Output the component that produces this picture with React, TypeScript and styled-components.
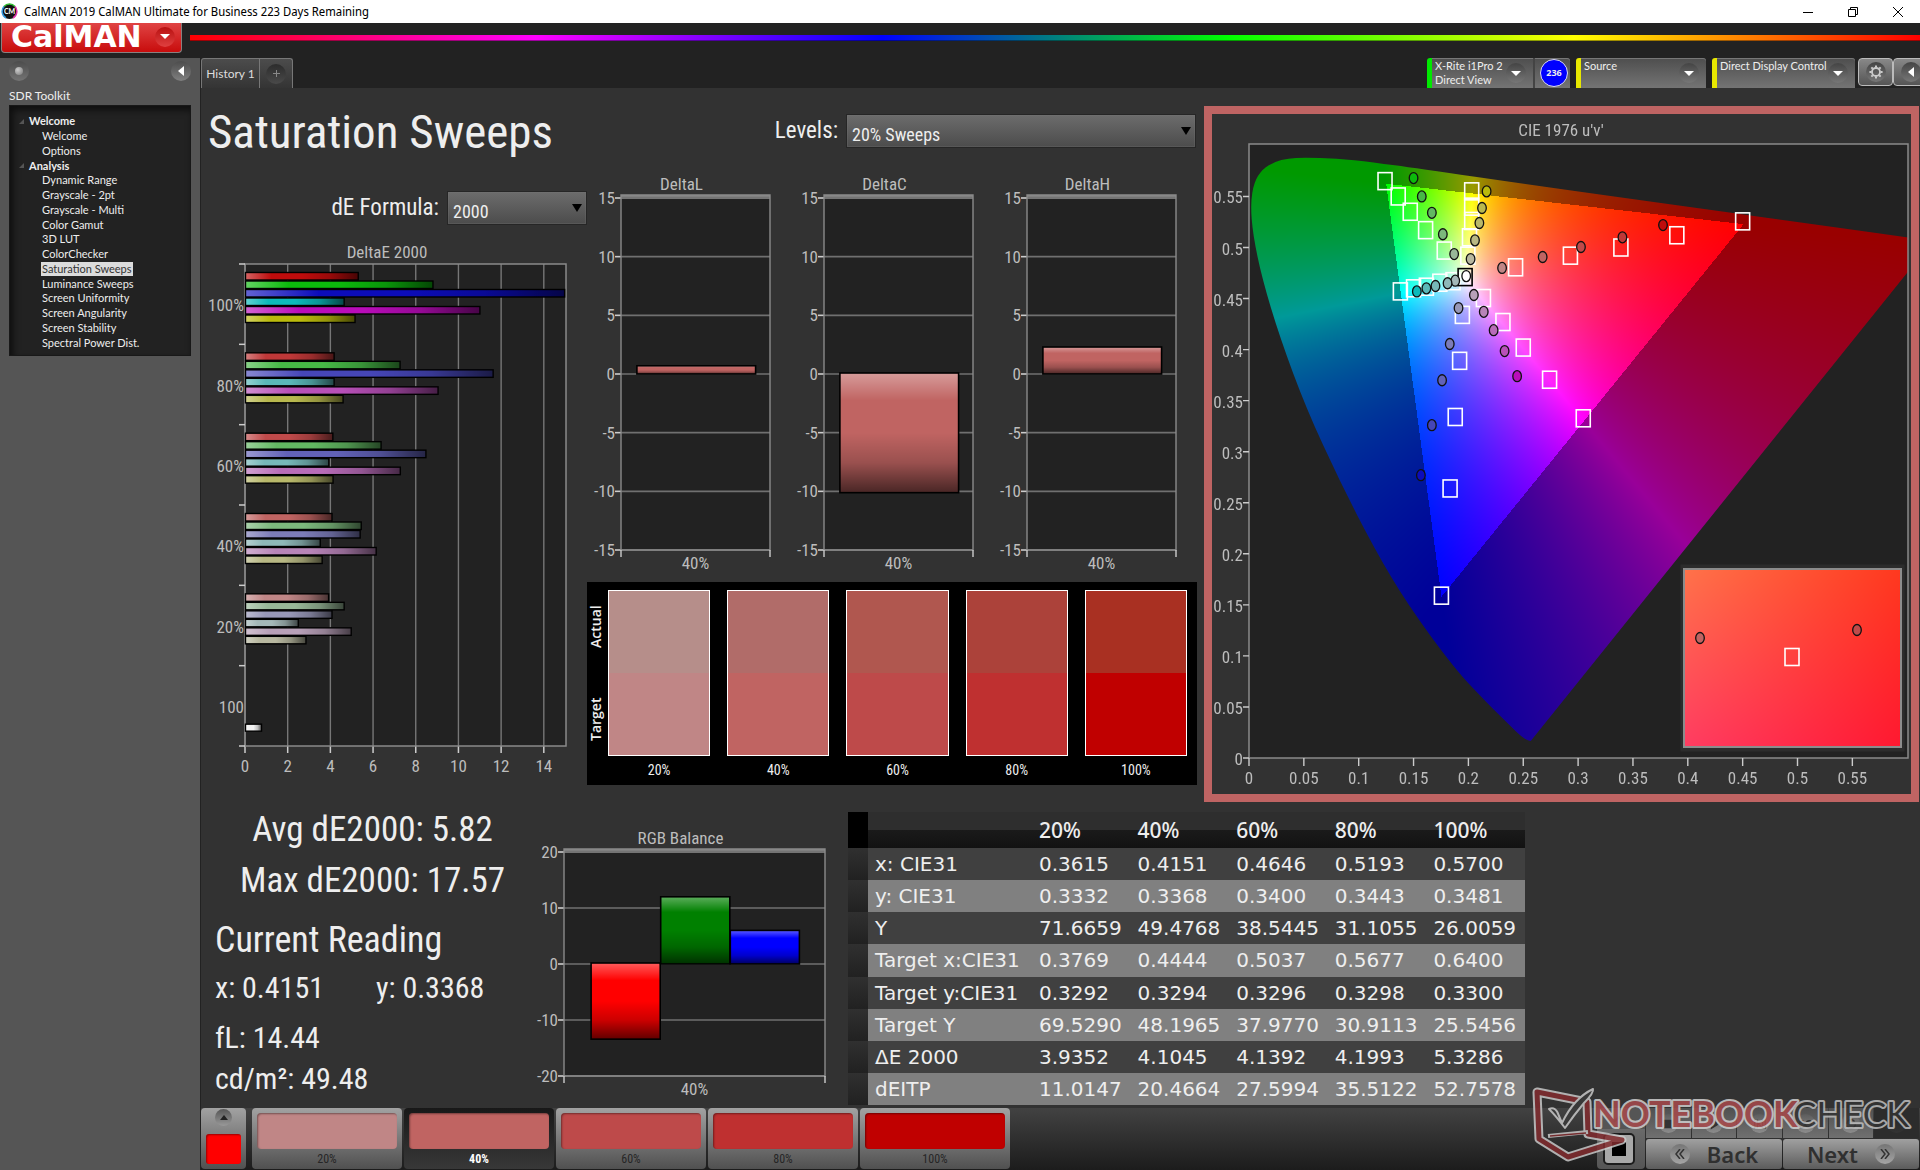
import React, { useLayoutEffect, useRef } from "react";
import styled, { createGlobalStyle } from "styled-components";

const narrow = `"Roboto Condensed", Roboto, sans-serif`;
const ui = `Lato, "Open Sans", sans-serif`;
const wide = `"DejaVu Sans", "Noto Sans", sans-serif`;

const GlobalStyle = createGlobalStyle`
  *, *::before, *::after { box-sizing: border-box; }
  body { margin: 0; background: #222; color: #eee; font-family: ${ui}; }
  button, select { font: inherit; color: inherit; border: 0; padding: 0; margin: 0; background: none; }
  ul { list-style: none; margin: 0; padding: 0; }
  h1, h2, p { margin: 0; font-weight: 400; }
  svg, canvas { display: block; }
`;

/* ---------- window frame ---------- */

const Window = styled.div`
  min-height: 100vh;
  display: flex;
  flex-direction: column;
  overflow: hidden;
`;

const TitleBar = styled.div`
  height: 23px;
  flex: none;
  background: #fff;
  color: #000;
  display: flex;
  align-items: center;
  padding-left: 1px;
  gap: 6px;
  font: 12px/22px "Noto Sans Display", "Noto Sans", sans-serif;
`;

const WindowButtons = styled.div`
  margin-left: auto;
  display: flex;
`;

const WindowButton = styled.button`
  width: 46px;
  height: 20px;
  margin-right: -1px;
  display: flex;
  align-items: center;
  justify-content: center;
`;

const Header = styled.header`
  height: 35px;
  flex: none;
  display: flex;
  background: #222;
`;

const LogoButton = styled.button`
  width: 181px;
  height: 30px;
  margin: 0 8px 0 1px;
  display: flex;
  align-items: center;
  justify-content: space-between;
  padding: 0 6px 2px 9px;
  background: linear-gradient(#e04444, #c80c0c);
  border: 1px solid #8a8080;
  border-top: 0;
  border-radius: 0 0 4px 4px;
  color: #fff;
  font: 700 30px/26px ${wide};
`;

const Rainbow = styled.div`
  flex: 1;
  height: 6px;
  margin-top: 12px;
  border-bottom: 1px solid #00000060;
  background: linear-gradient(90deg, #f00, #f0f, #00f, #0f0, #ff0, #f00);
`;

const Body = styled.div`
  flex: 1;
  display: flex;
`;

/* ---------- sidebar ---------- */

const Sidebar = styled.aside`
  width: 201px;
  flex: none;
  background: #555;
  border-right: 1px solid #222;
  padding: 3px 9px;
`;

const SidebarTop = styled.div`
  display: flex;
  justify-content: space-between;
  height: 27px;
`;

const SidebarTitle = styled.h2`
  font-size: 12px;
  line-height: 16px;
  height: 17px;
`;

const Round = styled.span<{ $size: number; $tone?: string }>`
  width: ${(p) => p.$size}px;
  height: ${(p) => p.$size}px;
  flex: none;
  border-radius: 50%;
  display: flex;
  align-items: center;
  justify-content: center;
  background: ${(p) => p.$tone ?? "linear-gradient(#444, #777)"};
`;

const PlainButton = styled.button`
  display: flex;
  height: 20px;
`;

const Tree = styled.nav`
  height: 251px;
  padding: 8px 0 0 8px;
  background: #222;
  border: 1px solid #181818;
  box-shadow: inset 3px 4px 7px #0009;
`;

const TreeList = styled.ul`
  display: grid;
  grid-auto-rows: 1fr;
  height: 236px;
`;

const TreeItem = styled.li<{ $level: number }>`
  display: flex;
  align-items: center;
  gap: 4px;
  padding-left: ${(p) => (p.$level ? 23 : 1)}px;
  font-size: 11px;
  font-weight: ${(p) => (p.$level ? 400 : 700)};
  line-height: 14px;
`;

const TreeLink = styled.a<{ $active?: boolean }>`
  color: ${(p) => (p.$active ? "#333" : "#eee")};
  background: ${(p) => (p.$active ? "#dcdcdc" : "none")};
  text-decoration: none;
  padding: 0 1px;
`;

/* ---------- tab bar ---------- */

const Content = styled.div`
  flex: 1;
  min-width: 0;
  display: flex;
  flex-direction: column;
  background: #323232;
`;

const TabBar = styled.div`
  height: 30px;
  flex: none;
  display: flex;
  background: #222;
`;

const Tabs = styled.div`
  display: flex;
  border: 1px solid #777;
  border-bottom: 0;
  border-radius: 3px 3px 0 0;
  background: linear-gradient(#4c4c4c, #343434);
  margin-right: auto;
`;

const Tab = styled.button<{ $width: number }>`
  width: ${(p) => p.$width}px;
  font-size: 12px;
  color: #ddd;
  display: flex;
  align-items: center;
  justify-content: center;
  & + & { border-left: 1px solid #777; }
`;

const Device = styled.button<{ $width: number; $lamp: string }>`
  width: ${(p) => p.$width}px;
  margin-right: 6px;
  display: flex;
  align-items: stretch;
  border-left: 5px solid ${(p) => p.$lamp};
  border-radius: 3px 3px 0 0;
  background: linear-gradient(#4e4e4e, #747474);
  box-shadow: inset 0 1px #777;
  text-align: left;
  font-size: 11px;
  line-height: 14px;
`;

const DeviceName = styled.span`
  flex: 1;
  padding: 1px 0 0 3px;
  white-space: pre-line;
`;

const DeviceArrow = styled.span`
  padding: 5px 7px 0 0;
`;

const Count = styled.span`
  border-left: 2px solid #444;
  padding: 1px 2px 0 5px;
`;

const CountBadge = styled.span`
  width: 28px;
  height: 28px;
  border-radius: 50%;
  border: 1px solid #dde;
  background: #00f;
  display: flex;
  align-items: center;
  justify-content: center;
  font: 700 9px/10px "Open Sans", sans-serif;
`;

const ToolButton = styled.button`
  width: 35px;
  height: 28px;
  border: 1px solid #bbb;
  border-radius: 4px;
  background: linear-gradient(#888, #555);
  display: flex;
  align-items: center;
  justify-content: center;
`;

const Tools = styled.div`
  display: flex;
  margin: 0 -8px 0 -3px;
`;

/* ---------- workspace ---------- */

const Upper = styled.section`
  display: flex;
  height: 714px;
`;

const Left = styled.div`
  width: 996px;
  flex: none;
`;

const TitleRow = styled.div`
  height: 87px;
  padding: 26px 1px 0 7px;
  display: flex;
  justify-content: space-between;
`;

const PageTitle = styled.h1`
  font: 400 47px/56px ${narrow};
  margin-top: -10px;
`;

const Field = styled.div<{ $end?: boolean }>`
  display: flex;
  justify-content: flex-end;
  gap: 8px;
  align-items: center;
  height: 34px;
`;

const FieldLabel = styled.label`
  font: 400 23px/36px ${narrow};
`;

const SelectBox = styled.div<{ $width: number }>`
  position: relative;
  width: ${(p) => p.$width}px;
  height: 34px;
`;

const Select = styled.select`
  appearance: none;
  width: 100%;
  height: 100%;
  padding: 7px 24px 0 5px;
  border: 1px solid #262626;
  background: linear-gradient(#6c6c6c, #4c4c4c);
  box-shadow: inset 0 0 0 1px #7774;
  font: 18px/24px ${narrow};
  color: #eee;
`;

const SelectArrow = styled.svg`
  position: absolute;
  right: 5px;
  top: 13px;
  pointer-events: none;
`;

const Columns = styled.div`
  display: grid;
  grid-template-columns: 386px 1fr;
`;

const FormulaColumn = styled.div`
  padding-top: 16px;
  display: flex;
  flex-direction: column;
  gap: 15px;
`;

const DeltaCharts = styled.div`
  display: flex;
  height: 407px;
`;

const Swatches = styled.div`
  display: flex;
  gap: 17px;
  height: 203px;
  padding: 8px 10px 0 0;
  background: #000;
`;

const SwatchSides = styled.div`
  width: 21px;
  margin-right: -17px;
  height: 166px;
  display: grid;
  grid-template-rows: 1fr 1fr;
  font: 600 14px/17px "Open Sans", sans-serif;
`;

const Side = styled.span<{ $align: string }>`
  writing-mode: vertical-rl;
  rotate: 180deg;
  justify-self: start;
  text-align: ${(p) => p.$align};
  padding: 15px 0;
`;

const Swatch = styled.figure`
  flex: 1;
  margin: 0;
  text-align: center;
  font: 14px/28px ${narrow};
`;

const SwatchBox = styled.div<{ $actual: string; $target: string }>`
  height: 166px;
  border: 1px solid #fff;
  background: linear-gradient(${(p) => `${p.$actual} 50%, ${p.$target} 50%`});
`;

const CiePanel = styled.div`
  flex: none;
  position: relative;
  height: 696px;
  margin: 18px 1px 0 7px;
  border: 8px solid #bf6463;
  background: #323232;
`;

const CieCanvas = styled.canvas`
  position: absolute;
  left: 37px;
  top: 30px;
`;

const InsetCanvas = styled.canvas`
  position: absolute;
  left: 472px;
  top: 455px;
`;

const CieOverlay = styled.svg`
  position: relative;
`;

const ChartText = styled.text`
  font: 17px ${narrow};
  fill: #bdbdbd;
`;

const Lower = styled.section`
  display: flex;
  flex: 1;
`;

const Readings = styled.div`
  width: 329px;
  padding: 2px 0 0 14px;
  font-family: ${narrow};
`;

const Stat = styled.p`
  font-size: 35px;
  line-height: 51px;
  text-align: center;
`;

const ReadingTitle = styled.h2`
  font-size: 36px;
  line-height: 56px;
  padding-top: 6px;
`;

const Reading = styled.p`
  font-size: 30px;
  line-height: 40px;
  display: grid;
  grid-template-columns: 161px 1fr;
  & + & { margin-top: 10px; }
  & + & + & { margin-top: 1px; }
`;

const RgbChart = styled.div`
  padding-top: 27px;
  width: 318px;
`;

const Table = styled.table`
  width: 677px;
  height: 293px;
  margin-top: 10px;
  table-layout: fixed;
  border-collapse: collapse;
  font: 20px/24px ${wide};
  color: #eee;
  text-align: left;
`;

const HeadCell = styled.th<{ $corner?: boolean }>`
  height: 36px;
  padding: 0 7px;
  font: 500 21px/28px "Noto Sans", sans-serif;
  background: ${(p) => (p.$corner ? "#000" : "linear-gradient(#2e2e2e 50%, #1a1a1a 50%, #121212)")};
`;

const Row = styled.tr`
  height: 32px;
  background: #404040;
  &:nth-child(even) { background: #808080; }
`;

const RowHandle = styled.td`
  background: linear-gradient(#303030, #212121);
`;

const RowName = styled.th`
  padding: 0 0 0 7px;
  font-weight: 400;
  white-space: nowrap;
`;

const Cell = styled.td`
  padding: 0 0 0 7px;
`;

/* ---------- bottom strip ---------- */

const Strip = styled.footer`
  height: 62px;
  flex: none;
  display: flex;
  gap: 2px;
  padding-bottom: 1px;
  background: linear-gradient(#424242, #1c1c1c);
`;

const Grey = styled.button<{ $dark?: boolean }>`
  border-radius: 4px;
  background: ${(p) => (p.$dark ? "linear-gradient(#181818, #383838)" : "linear-gradient(#a2a2a2, #505050)")};
`;

const CurrentButton = styled(Grey)`
  width: 45px;
  margin-right: 4px;
  padding: 1px 5px 5px;
  display: flex;
  flex-direction: column;
  justify-content: space-between;
  align-items: center;
`;

const CurrentColour = styled.span`
  width: 35px;
  height: 30px;
  border-radius: 3px;
  background: #f00;
  box-shadow: inset 1px 1px 2px #0006;
`;

const LevelButton = styled(Grey)`
  width: 150px;
  padding: 5px;
  font: ${(p) => (p.$dark ? 700 : 400)} 12px/20px ${narrow};
  color: ${(p) => (p.$dark ? "#fff" : "#262626")};
`;

const LevelColour = styled.span<{ $tone: string }>`
  display: block;
  height: 36px;
  border-radius: 4px;
  background: ${(p) => p.$tone};
  box-shadow: inset 1px 1px 2px #0006;
`;

const Transport = styled.div`
  margin-left: auto;
  padding-right: 1px;
  display: flex;
  gap: 1px;
`;

const StopButton = styled.button`
  width: 48px;
  display: flex;
  flex-direction: column;
  align-items: center;
  justify-content: space-between;
  border-radius: 4px;
  padding: 4px 4px 4px 0;
  background: linear-gradient(#555 34%, #6a6a6a 34%, #555);
`;

const TransportGrid = styled.div`
  display: grid;
  width: 273px;
  grid-template-columns: repeat(6, 1fr);
  grid-template-rows: 30px 30px;
  gap: 1px;
`;

const MiniButton = styled.button<{ $off?: boolean }>`
  display: flex;
  align-items: flex-end;
  justify-content: center;
  padding-bottom: 5px;
  background: ${(p) => (p.$off ? "#2c2c2c" : "linear-gradient(#505050, #707070)")};
`;

const NavButton = styled.button`
  grid-column: span 3;
  border-radius: 3px;
  background: linear-gradient(#a0a0a0, #5c5c5c);
  color: #303030;
  font: 600 22px/28px "Noto Sans", "Open Sans", sans-serif;
  display: flex;
  align-items: center;
  justify-content: center;
  gap: 17px;
`;

const Watermark = styled.svg`
  position: absolute;
  right: 6px;
  bottom: 8px;
  opacity: 0.85;
  pointer-events: none;
`;

const MarkText = styled.text`
  font: 700 36px ${ui};
`;

const MarkTextLight = styled.text`
  font: 400 35px ${ui};
`;

const Main = styled.main`
  position: relative;
  flex: 1;
  display: flex;
  flex-direction: column;
`;

/* ---------- data ---------- */

const levels = ["20%", "40%", "60%", "80%", "100%"];
const redTargets = ["#c08686", "#c06462", "#be4a4a", "#bf3030", "#c00000"];
const redActuals = ["#b68e8a", "#b16c69", "#b0574f", "#ac423a", "#a93022"];

const hues = [
  { tones: ["#c08686", "#c06462", "#c04a4a", "#bf3838", "#be0c0c"] },
  { tones: ["#98b898", "#7cb87c", "#62b862", "#46b846", "#0cba0c"] },
  { tones: ["#9898b8", "#7c7cb8", "#6262b8", "#4646b8", "#0c0cba"] },
  { tones: ["#a4b8b8", "#8eb8b8", "#76b8b8", "#5ab8b8", "#0cbaba"] },
  { tones: ["#b8a0b8", "#b884b8", "#b86cb8", "#b850b8", "#ba0cba"] },
  { tones: ["#b8b8a0", "#b8b884", "#b8b86a", "#b8b84e", "#baba0c"] },
];

const deltaE: number[][] = [
  [3.94, 4.67, 4.1, 2.52, 5.0, 2.88],
  [4.1, 5.47, 5.42, 3.55, 6.17, 3.64],
  [4.14, 6.4, 8.5, 3.95, 7.3, 4.15],
  [4.2, 7.29, 11.65, 4.2, 9.07, 4.62],
  [5.33, 8.83, 17.57, 4.67, 11.03, 5.18],
];

type UV = [number, number];

const targets: UV[][] = [
  [[0.243, 0.4806], [0.293, 0.492], [0.339, 0.5], [0.39, 0.512], [0.45, 0.5256]],
  [[0.178, 0.497], [0.161, 0.517], [0.147, 0.535], [0.136, 0.55], [0.124, 0.565]],
  [[0.1945, 0.434], [0.192, 0.389], [0.188, 0.334], [0.1833, 0.264], [0.1754, 0.159]],
  [[0.186, 0.467], [0.174, 0.4655], [0.1617, 0.4616], [0.15, 0.46], [0.138, 0.457]],
  [[0.2137, 0.4505], [0.2315, 0.427], [0.25, 0.402], [0.274, 0.3705], [0.3047, 0.3327]],
  [[0.1995, 0.492], [0.201, 0.51], [0.203, 0.526], [0.203, 0.54], [0.203, 0.555]],
];

const measured: UV[][] = [
  [[0.2307, 0.48], [0.2677, 0.4907], [0.3026, 0.5005], [0.3404, 0.51], [0.3774, 0.522]],
  [[0.187, 0.4936], [0.1767, 0.513], [0.1667, 0.534], [0.1575, 0.55], [0.15, 0.568]],
  [[0.191, 0.4407], [0.183, 0.4055], [0.176, 0.37], [0.1667, 0.326], [0.1567, 0.277]],
  [[0.188, 0.4675], [0.181, 0.465], [0.17, 0.4623], [0.1617, 0.46], [0.153, 0.457]],
  [[0.205, 0.4535], [0.214, 0.437], [0.223, 0.419], [0.233, 0.3986], [0.2444, 0.374]],
  [[0.202, 0.4887], [0.206, 0.507], [0.21, 0.524], [0.2124, 0.5387], [0.2166, 0.555]],
];

const locus: UV[] = [
  [0.2568, 0.0166], [0.2522, 0.0169], [0.2347, 0.035], [0.2161, 0.0549], [0.1877, 0.0871],
  [0.1441, 0.151], [0.1147, 0.2044], [0.0828, 0.2708], [0.0521, 0.3427], [0.0282, 0.4117],
  [0.0119, 0.4698], [0.0035, 0.5131], [0.0014, 0.5432], [0.0046, 0.5638], [0.0123, 0.577],
  [0.0231, 0.5837], [0.036, 0.5875], [0.0501, 0.588], [0.0792, 0.5875], [0.1127, 0.5835],
  [0.1531, 0.5775], [0.2623, 0.5604], [0.4035, 0.5393], [0.5203, 0.5219], [0.6234, 0.5065],
];

const tableRows: [string, string[]][] = [
  ["x: CIE31", ["0.3615", "0.4151", "0.4646", "0.5193", "0.5700"]],
  ["y: CIE31", ["0.3332", "0.3368", "0.3400", "0.3443", "0.3481"]],
  ["Y", ["71.6659", "49.4768", "38.5445", "31.1055", "26.0059"]],
  ["Target x:CIE31", ["0.3769", "0.4444", "0.5037", "0.5677", "0.6400"]],
  ["Target y:CIE31", ["0.3292", "0.3294", "0.3296", "0.3298", "0.3300"]],
  ["Target Y", ["69.5290", "48.1965", "37.9770", "30.9113", "25.5456"]],
  ["ΔE 2000", ["3.9352", "4.1045", "4.1392", "4.1993", "5.3286"]],
  ["dEITP", ["11.0147", "20.4664", "27.5994", "35.5122", "52.7578"]],
];

const tree: [string, number][] = [
  ["Welcome", 0], ["Welcome", 1], ["Options", 1], ["Analysis", 0], ["Dynamic Range", 1],
  ["Grayscale - 2pt", 1], ["Grayscale - Multi", 1], ["Color Gamut", 1], ["3D LUT", 1],
  ["ColorChecker", 1], ["Saturation Sweeps", 1], ["Luminance Sweeps", 1],
  ["Screen Uniformity", 1], ["Screen Angularity", 1], ["Screen Stability", 1],
  ["Spectral Power Dist.", 1],
];

/* ---------- drawings ---------- */

const Down = ({ size = 10, fill = "#fff" }) => (
  <svg width={size} height={size / 2} viewBox="0 0 10 5"><path d="M0 0H10L5 5Z" fill={fill} /></svg>
);

const Back = () => (
  <svg width="6" height="10" viewBox="0 0 6 10"><path d="M6 0V10L0 5Z" fill="#fff" /></svg>
);

function Gloss({ id, vertical }: { id: string; vertical?: boolean }) {
  const end = vertical ? { x2: 0, y2: 1 } : { x2: 1, y2: 0 };
  return (
    <linearGradient id={id} x1={0} y1={0} {...end}>
      <stop offset="0" stopColor="#fff" stopOpacity="0.36" />
      <stop offset="0.23" stopColor="#fff" stopOpacity="0" />
      <stop offset="0.5" stopColor="#000" stopOpacity="0" />
      <stop offset="0.75" stopColor="#000" stopOpacity="0.2" />
      <stop offset="1" stopColor="#000" stopOpacity="0.62" />
    </linearGradient>
  );
}

function DeltaEChart() {
  const left = 44, right = 365, top = 24, bottom = 506;
  const unit = (right - left) / 15.04;
  const band = (bottom - top) / 6;
  const names = ["100%", "80%", "60%", "40%", "20%", "100"];
  const white = { x: left + 0.5, y: top + 5 * band + 58.5, width: 16, height: 7 };
  return (
    <svg width="386" height="545" role="img" aria-label="DeltaE 2000">
      <defs><Gloss id="row-gloss" /></defs>
      <ChartText x="186" y="18" textAnchor="middle">DeltaE 2000</ChartText>
      <rect x={left} y={top} width={right - left} height={bottom - top} fill="#222" />
      {[0, 2, 4, 6, 8, 10, 12, 14].map((n) => (
        <g key={n}>
          <path d={`M${left + n * unit} ${top}V${bottom}`} stroke="#777" strokeWidth="1.4" />
          <path d={`M${left + n * unit} ${bottom}v7`} stroke="#ccc" strokeWidth="1.5" />
          <ChartText x={left + n * unit} y="532" textAnchor="middle">{n}</ChartText>
        </g>
      ))}
      <rect x={left} y={top} width={right - left} height={bottom - top} fill="none" stroke="#8a8a8a" strokeWidth="1.5" />
      {names.map((name, g) => (
        <g key={name}>
          <path d={`M${left - 6} ${top + g * band}h6`} stroke="#ccc" strokeWidth="1.5" />
          <ChartText x={left - 1} y={top + (g + 0.5) * band + 7} textAnchor="end">{name}</ChartText>
          {g < 5 && deltaE[4 - g].map((value, i) => {
            const box = { x: left + 0.5, y: top + g * band + 8.5 + i * 8.5, width: Math.min(value, 15) * unit - 1, height: 7.5 };
            return (
              <g key={i}>
                <rect {...box} fill={hues[i].tones[4 - g]} />
                <rect {...box} fill="url(#row-gloss)" stroke="#000" strokeWidth="1.4" />
              </g>
            );
          })}
        </g>
      ))}
      <rect {...white} fill="#f2f2f2" />
      <rect {...white} fill="url(#row-gloss)" stroke="#000" strokeWidth="1.4" />
      <path d={`M${left - 6} ${bottom}h6`} stroke="#ccc" strokeWidth="1.5" />
    </svg>
  );
}

type ColumnChartProps = {
  title: string;
  plotWidth: number;
  plotHeight: number;
  range: number;
  step: number;
  bars: { value: number; color: string }[];
};

function ColumnChart({ title, plotWidth, plotHeight, range, step, bars }: ColumnChartProps) {
  const left = 34, top = 23;
  const right = left + plotWidth, bottom = top + plotHeight;
  const zero = top + plotHeight / 2;
  const unit = plotHeight / (range * 2);
  const barWidth = (plotWidth * 0.8) / bars.length;
  const ticks: number[] = [];
  for (let n = range; n >= -range; n -= step) ticks.push(n);
  const id = `${title.replace(" ", "-")}-gloss`;
  return (
    <svg width={right + 20} height={bottom + 26} role="img" aria-label={title}>
      <defs><Gloss id={id} vertical /></defs>
      <ChartText x={left + plotWidth / 2 - 14} y="15" textAnchor="middle">{title}</ChartText>
      <rect x={left} y={top - 3} width={plotWidth} height={plotHeight + 3} fill="#222" />
      <rect x={left} y={top - 3} width={plotWidth} height="4" fill="#808080" />
      {ticks.map((n) => (
        <g key={n}>
          <path d={`M${left} ${zero - n * unit}H${right}`} stroke="#707070" strokeWidth="1.6" />
          <path d={`M${left - 6} ${zero - n * unit}h6`} stroke="#ccc" strokeWidth="1.6" />
          <ChartText x={left - 6} y={zero - n * unit + 6} textAnchor="end">{n}</ChartText>
        </g>
      ))}
      <path d={`M${left} ${top - 3}V${bottom}H${right}V${top - 3}Z`} fill="none" stroke="#8a8a8a" strokeWidth="1.4" />
      <path d={`M${left} ${bottom}v7M${right} ${bottom}v7`} stroke="#ccc" strokeWidth="1.4" />
      {bars.map((bar, i) => {
        const box = {
          x: left + plotWidth * 0.1 + 1 + i * barWidth,
          y: bar.value > 0 ? zero - bar.value * unit : zero - 1,
          width: barWidth - 0.5,
          height: Math.abs(bar.value) * unit,
        };
        return (
          <g key={i}>
            <rect {...box} fill={bar.color} />
            <rect {...box} fill={`url(#${id})`} stroke="#000" strokeWidth="1.6" />
          </g>
        );
      })}
      <ChartText x={left + plotWidth / 2} y={bottom + 19} textAnchor="middle">40%</ChartText>
    </svg>
  );
}

const U = 1097;
const V = 1021;
const PLOT_W = 659;
const PLOT_H = 614;

/* Converts a u'v' chromaticity to its brightest linear RGB, dimmed outside the display gamut. */
function colourAt(u: number, v: number, out: Uint8ClampedArray, at: number) {
  const d = 6 * u - 16 * v + 12;
  const x = (9 * u) / d;
  const y = (4 * v) / d;
  const X = x / y;
  const Z = (1 - x - y) / y;
  const rgb = [
    3.2406 * X - 1.5372 - 0.4986 * Z,
    -0.9689 * X + 1.8758 + 0.0415 * Z,
    0.0557 * X - 0.204 + 1.057 * Z,
  ];
  const outside = Math.min(...rgb) < 0;
  const max = Math.max(...rgb);
  for (let i = 0; i < 3; i++) {
    out[at + i] = 255 * (Math.max(0, rgb[i]) / max) * (outside ? 0.6 : 1);
  }
  out[at + 3] = 255;
}

function Gamut() {
  const ref = useRef<HTMLCanvasElement>(null);
  useLayoutEffect(() => {
    const ctx = ref.current!.getContext("2d")!;
    const image = ctx.createImageData(PLOT_W, PLOT_H);
    for (let py = 0; py < PLOT_H; py++)
      for (let px = 0; px < PLOT_W; px++)
        colourAt((px + 0.5) / U, (PLOT_H - py - 0.5) / V, image.data, (py * PLOT_W + px) * 4);
    ctx.putImageData(image, 0, 0);
    const points = locus.map(([u, v]) => [u * U, PLOT_H - v * V]);
    ctx.globalCompositeOperation = "destination-in";
    ctx.beginPath();
    ctx.moveTo(points[0][0], points[0][1]);
    for (let i = 1; i < points.length - 1; i++) {
      const [x, y] = points[i];
      const [nx, ny] = points[i + 1];
      ctx.quadraticCurveTo(x, y, (x + nx) / 2, (y + ny) / 2);
    }
    ctx.lineTo(points[points.length - 1][0], points[points.length - 1][1]);
    ctx.closePath();
    ctx.fill();
    ctx.globalCompositeOperation = "destination-over";
    ctx.fillStyle = "#222";
    ctx.fillRect(0, 0, PLOT_W, PLOT_H);
  }, []);
  return <CieCanvas ref={ref} width={PLOT_W} height={PLOT_H} />;
}

function Detail() {
  const ref = useRef<HTMLCanvasElement>(null);
  useLayoutEffect(() => {
    const w = 217, h = 178;
    const ctx = ref.current!.getContext("2d")!;
    const image = ctx.createImageData(w, h);
    const corners = [[255, 114, 74], [255, 56, 30], [255, 60, 98], [255, 24, 48]];
    for (let y = 0; y < h; y++)
      for (let x = 0; x < w; x++) {
        const s = x / w, t = y / h, at = (y * w + x) * 4;
        for (let i = 0; i < 3; i++)
          image.data[at + i] =
            (1 - t) * ((1 - s) * corners[0][i] + s * corners[1][i]) + t * ((1 - s) * corners[2][i] + s * corners[3][i]);
        image.data[at + 3] = 255;
      }
    ctx.putImageData(image, 0, 0);
  }, []);
  return <InsetCanvas ref={ref} width={217} height={178} />;
}

const Square = ({ x, y, stroke = "#fff" }: { x: number; y: number; stroke?: string }) => (
  <rect x={x - 7} y={y - 8.5} width="14" height="17" fill="none" stroke={stroke} strokeWidth="1.6" />
);

const Dot = ({ x, y, fill }: { x: number; y: number; fill: string }) => (
  <ellipse cx={x} cy={y} rx="4.3" ry="5.5" fill={fill} stroke="#111" strokeWidth="1.3" />
);

function CieChart() {
  const px = (u: number) => 37 + u * U;
  const py = (v: number) => 644 - v * V;
  const steps = Array.from({ length: 12 }, (_, i) => i * 5);
  const label = (n: number) => String(n / 100);
  return (
    <CiePanel>
      <Gamut />
      <Detail />
      <CieOverlay width="699" height="680" role="img" aria-label="CIE 1976 u'v'">
        <ChartText x="349" y="22" textAnchor="middle">CIE 1976 u'v'</ChartText>
        <rect x="37" y="30" width={PLOT_W} height={PLOT_H} fill="none" stroke="#8a8a8a" strokeWidth="1.5" />
        {steps.map((n) => (
          <g key={n}>
            <path d={`M31 ${py(n / 100)}h6M${px(n / 100)} 644v8`} stroke="#ccc" strokeWidth="1.4" />
            <ChartText x="31" y={py(n / 100) + 7} textAnchor="end">{label(n)}</ChartText>
            <ChartText x={px(n / 100)} y="670" textAnchor="middle">{label(n)}</ChartText>
          </g>
        ))}
        {targets.flatMap((set, h) => set.map(([u, v], i) => <Square key={`${h}-${i}`} x={px(u)} y={py(v)} />))}
        <Square x={px(0.197)} y={py(0.471)} stroke="#000" />
        {measured.flatMap((set, h) =>
          set.map(([u, v], i) => <Dot key={`${h}-${i}`} x={px(u)} y={py(v)} fill={hues[h].tones[i]} />)
        )}
        <Dot x={px(0.198)} y={py(0.472)} fill="#fff" />
        <rect x="470.5" y="452.5" width="220" height="183" fill="none" stroke="#2c2c2c" strokeWidth="4" />
        <rect x="472" y="455" width="217" height="178" fill="none" stroke="#8c8c8c" strokeWidth="2" />
        <Dot x={488} y={524} fill={hues[0].tones[1]} />
        <Square x={580} y={543} />
        <Dot x={645} y={516} fill={hues[0].tones[2]} />
      </CieOverlay>
    </CiePanel>
  );
}

function AppIcon() {
  return (
    <svg width="17" height="17" viewBox="0 0 17 17">
      <circle cx="8.500" cy="8.500" r="7.500" fill="#111" />
      <path d="M3 3.500A7.500 7.500 0 0 1 14 3.500" fill="none" stroke="#3b3" strokeWidth="1.500" />
      <path d="M14 3.500A7.500 7.500 0 0 1 12 15" fill="none" stroke="#d3a" strokeWidth="1.500" />
      <path d="M3 3.500A7.500 7.500 0 0 0 5 15" fill="none" stroke="#39d" strokeWidth="1.500" />
      <text x="8.500" y="11" textAnchor="middle" fontSize="7" fontWeight="700" fontFamily="Lato" fill="#fff">CM</text>
    </svg>
  );
}

function Gear() {
  return (
    <svg width="14" height="14" viewBox="-7 -7 14 14" fill="none" stroke="#ccc">
      <circle r="4" strokeWidth="1.800" />
      {[0, 45, 90, 135, 180, 225, 270, 315].map((a) => (
        <path key={a} d="M0 -4.500V-6.600" strokeWidth="2" transform={`rotate(${a})`} />
      ))}
    </svg>
  );
}

const miniIcons = [
  "M4 4H12V12H4Z",
  "M5 3L13 8L5 13Z",
  "M2 3V13M14 3V13M5 3V13M6 8L11 4V12Z",
  "M1 8C3 3 6 3 8 8S13 13 15 8S10 3 8 8S3 13 1 8",
  "M3 8A5 5 0 0 1 12 5M13 8A5 5 0 0 1 4 11",
];

export default function App() {
  return (
    <Window>
      <GlobalStyle />
      <TitleBar>
        <AppIcon />
        <span>CalMAN 2019 CalMAN Ultimate for Business 223 Days Remaining</span>
        <WindowButtons>
          <WindowButton aria-label="Minimize">
            <svg width="10" height="10"><path d="M0 5.500H10" stroke="#000" /></svg>
          </WindowButton>
          <WindowButton aria-label="Restore">
            <svg width="10" height="10" fill="none" stroke="#000">
              <path d="M0.500 2.500H7.500V9.500H0.500ZM2.500 2.500V0.500H9.500V7.500H7.500" />
            </svg>
          </WindowButton>
          <WindowButton aria-label="Close">
            <svg width="10" height="10"><path d="M0 0L10 10M10 0L0 10" stroke="#000" /></svg>
          </WindowButton>
        </WindowButtons>
      </TitleBar>
      <Header>
        <LogoButton>
          CalMAN
          <Round $size={20} $tone="linear-gradient(#b81010, #e04040)"><Down size={10} /></Round>
        </LogoButton>
        <Rainbow />
      </Header>
      <Body>
        <Sidebar>
          <SidebarTop>
            <PlainButton aria-label="Options">
              <Round $size={20} $tone="linear-gradient(#4c4c4c, #747474)">
                <Round $size={8} $tone="radial-gradient(circle at 35% 35%, #ccc, #777)" />
              </Round>
            </PlainButton>
            <PlainButton aria-label="Collapse">
              <Round $size={20} $tone="linear-gradient(#4c4c4c, #808080)"><Back /></Round>
            </PlainButton>
          </SidebarTop>
          <SidebarTitle>SDR Toolkit</SidebarTitle>
          <Tree>
            <TreeList>
              {tree.map(([name, level], i) => (
                <TreeItem key={i} $level={level}>
                  {level === 0 && (
                    <svg width="5" height="5"><path d="M5 0V5H0Z" fill="#555" /></svg>
                  )}
                  <TreeLink href="#" $active={name === "Saturation Sweeps"}>{name}</TreeLink>
                </TreeItem>
              ))}
            </TreeList>
          </Tree>
        </Sidebar>
        <Content>
          <TabBar>
            <Tabs>
              <Tab $width={57}>History 1</Tab>
              <Tab $width={33} aria-label="Add history">
                <Round $size={20} $tone="linear-gradient(#2c2c2c, #4a4a4a)">
                  <svg width="7" height="7"><path d="M0 3.500H7M3.500 0V7" stroke="#888" /></svg>
                </Round>
              </Tab>
            </Tabs>
            <Device $width={143} $lamp="#00e800">
              <DeviceName>{"X-Rite i1Pro 2\nDirect View"}</DeviceName>
              <DeviceArrow><Round $size={20}><Down /></Round></DeviceArrow>
              <Count><CountBadge>236</CountBadge></Count>
            </Device>
            <Device $width={130} $lamp="#e8e800">
              <DeviceName>Source</DeviceName>
              <DeviceArrow><Round $size={20}><Down /></Round></DeviceArrow>
            </Device>
            <Device $width={143} $lamp="#e8e800">
              <DeviceName>Direct Display Control</DeviceName>
              <DeviceArrow><Round $size={20}><Down /></Round></DeviceArrow>
            </Device>
            <Tools>
              <ToolButton aria-label="Settings"><Round $size={20}><Gear /></Round></ToolButton>
              <ToolButton aria-label="Collapse panel"><Round $size={20}><Back /></Round></ToolButton>
            </Tools>
          </TabBar>
          <Main>
            <Upper>
              <Left>
                <TitleRow>
                  <PageTitle>Saturation Sweeps</PageTitle>
                  <Field>
                    <FieldLabel htmlFor="levels">Levels:</FieldLabel>
                    <SelectBox $width={350}>
                      <Select id="levels"><option>20% Sweeps</option></Select>
                      <SelectArrow width="10" height="8"><path d="M0 0H10L5 8Z" /></SelectArrow>
                    </SelectBox>
                  </Field>
                </TitleRow>
                <Columns>
                  <FormulaColumn>
                    <Field>
                      <FieldLabel htmlFor="formula">dE Formula:</FieldLabel>
                      <SelectBox $width={140}>
                        <Select id="formula"><option>2000</option></Select>
                        <SelectArrow width="10" height="8"><path d="M0 0H10L5 8Z" /></SelectArrow>
                      </SelectBox>
                    </Field>
                    <DeltaEChart />
                  </FormulaColumn>
                  <div>
                    <DeltaCharts>
                      {([["DeltaL", 0.7], ["DeltaC", -10.2], ["DeltaH", 2.3]] as [string, number][]).map(([name, value]) => (
                        <ColumnChart key={name} title={name} plotWidth={149} plotHeight={352} range={15} step={5}
                          bars={[{ value, color: "#c06462" }]} />
                      ))}
                    </DeltaCharts>
                    <Swatches>
                      <SwatchSides>
                        <Side $align="right">Actual</Side>
                        <Side $align="left">Target</Side>
                      </SwatchSides>
                      {levels.map((level, i) => (
                        <Swatch key={level}>
                          <SwatchBox $actual={redActuals[i]} $target={redTargets[i]} />
                          <figcaption>{level}</figcaption>
                        </Swatch>
                      ))}
                    </Swatches>
                  </div>
                </Columns>
              </Left>
              <CieChart />
            </Upper>
            <Lower>
              <Readings>
                <Stat>Avg dE2000: 5.82</Stat>
                <Stat>Max dE2000: 17.57</Stat>
                <ReadingTitle>Current Reading</ReadingTitle>
                <Reading><span>x: 0.4151</span><span>y: 0.3368</span></Reading>
                <Reading><span>fL: 14.44</span></Reading>
                <Reading><span>cd/m²: 49.48</span></Reading>
              </Readings>
              <RgbChart>
                <ColumnChart title="RGB Balance" plotWidth={261} plotHeight={224} range={20} step={10}
                  bars={[{ value: -13.6, color: "#f00" }, { value: 12, color: "#008000" }, { value: 6, color: "#00f" }]} />
              </RgbChart>
              <Table>
                <colgroup>
                  <col width="20" /><col width="164" /><col /><col /><col /><col /><col />
                </colgroup>
                <thead>
                  <tr>
                    <HeadCell $corner />
                    <HeadCell />
                    {levels.map((level) => <HeadCell key={level} scope="col">{level}</HeadCell>)}
                  </tr>
                </thead>
                <tbody>
                  {tableRows.map(([name, values]) => (
                    <Row key={name}>
                      <RowHandle />
                      <RowName scope="row">{name}</RowName>
                      {values.map((value, i) => <Cell key={i}>{value}</Cell>)}
                    </Row>
                  ))}
                </tbody>
              </Table>
            </Lower>
            <Strip>
              <CurrentButton aria-label="Current colour">
                <Round $size={17} $tone="linear-gradient(#555, #999)">
                  <svg width="8" height="5"><path d="M0 5H8L4 0Z" fill="#222" /></svg>
                </Round>
                <CurrentColour />
              </CurrentButton>
              {levels.map((level, i) => (
                <LevelButton key={level} $dark={i === 1}>
                  <LevelColour $tone={redTargets[i]} />
                  {level}
                </LevelButton>
              ))}
              <Transport>
                <StopButton aria-label="Stop">
                  <svg width="14" height="14"><path d="M2 10L7 5L12 10" fill="none" stroke="#333" strokeWidth="2" /></svg>
                  <svg width="32" height="32">
                    <rect x="1" y="1" width="30" height="30" rx="4" fill="#a8a8a8" stroke="#1c1c1c" strokeWidth="2" />
                    <rect x="9" y="9" width="14" height="14" fill="#000" />
                  </svg>
                </StopButton>
                <TransportGrid>
                  {miniIcons.map((d, i) => (
                    <MiniButton key={i} aria-label={["Stop", "Play", "Step", "Loop", "Refresh"][i]}>
                      <Round $size={19} $tone="linear-gradient(#5c5c5c, #8c8c8c)">
                        <svg width="14" height="14" viewBox="0 0 16 16">
                          <path d={d} fill={i < 2 ? "#333" : "none"} stroke="#333" strokeWidth="1.500" />
                        </svg>
                      </Round>
                    </MiniButton>
                  ))}
                  <MiniButton $off aria-label="More">
                    <Round $size={19} $tone="linear-gradient(#222, #333)" />
                  </MiniButton>
                  <NavButton>
                    <Round $size={20} $tone="linear-gradient(#757575, #a5a5a5)">
                      <svg width="10" height="10" fill="none" stroke="#333" strokeWidth="1.500"><path d="M5 0L1 5L5 10M9 0L5 5L9 10" /></svg>
                    </Round>
                    Back
                  </NavButton>
                  <NavButton>
                    Next
                    <Round $size={20} $tone="linear-gradient(#757575, #a5a5a5)">
                      <svg width="10" height="10" fill="none" stroke="#333" strokeWidth="1.500"><path d="M1 0L5 5L1 10M5 0L9 5L5 10" /></svg>
                    </Round>
                  </NavButton>
                </TransportGrid>
              </Transport>
            </Strip>
            <Watermark width="382" height="76" viewBox="0 0 382 76">
              <g fill="none" strokeLinejoin="round">
                <path d="M5 6L55 16L56 48L90 54L36 71L7 53Z" stroke="#c8c8c8" strokeWidth="9" />
                <path d="M5 6L55 16L56 48L90 54L36 71L7 53Z" stroke="#822c2f" strokeWidth="5" />
                <path d="M16 50L56 46" stroke="#c8c8c8" strokeWidth="4" />
                <path d="M18 50L54 47" stroke="#822c2f" strokeWidth="1.500" />
                <path d="M17 23Q24 20 27 30L30 37Q42 12 61 3Q62 7 52 17Q42 29 33 42Q24 30 17 23Z" fill="#3a3a3a" stroke="#c8c8c8" strokeWidth="2" />
              </g>
              <g strokeLinejoin="round" paintOrder="stroke">
                <MarkText x="61" y="41" fill="#a84a4c" stroke="#cfcfcf" strokeWidth="4">NOTEBOOK</MarkText>
                <MarkTextLight x="261" y="41" fill="#333" stroke="#bdbdbd" strokeWidth="4">CHECK</MarkTextLight>
              </g>
            </Watermark>
          </Main>
        </Content>
      </Body>
    </Window>
  );
}
